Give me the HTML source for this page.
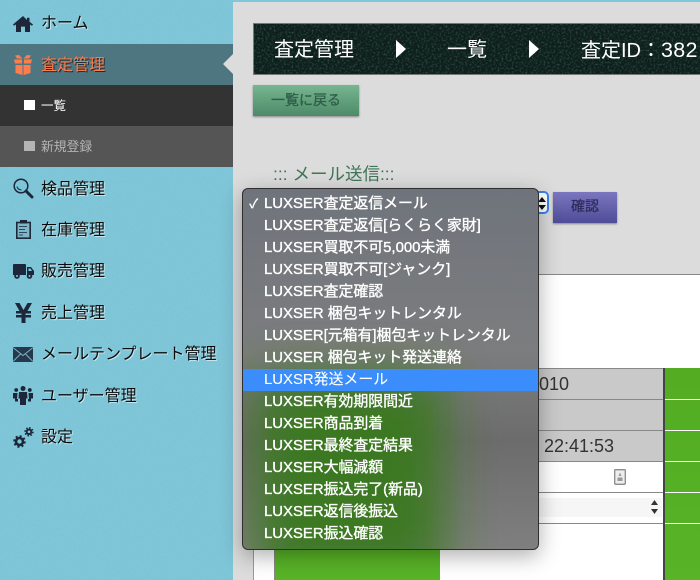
<!DOCTYPE html>
<html lang="ja"><head><meta charset="utf-8">
<style>
*{box-sizing:border-box}
html,body{margin:0;padding:0;overflow:hidden}
body{width:700px;height:580px;position:relative;overflow:hidden;background:#dcdcdc;font-family:"Liberation Sans","Noto Sans CJK JP",sans-serif}
.a{position:absolute}
#side{left:0;top:0;width:233px;height:580px;background:#80c7d9}
.n{position:absolute;left:41px;font-size:16px;line-height:20px;color:#0a0a0a;white-space:nowrap;text-shadow:1px 1px 0 rgba(255,255,255,.55)}
.ic{position:absolute}
.m{position:absolute;left:21px;font-size:14.9px;line-height:22px;height:22px;color:#fff;white-space:nowrap;-webkit-text-stroke:.35px #fff}
</style></head><body>

<!-- top strip -->
<div class="a" style="left:0;top:0;width:700px;height:2px;background:#80c7d9"></div>

<!-- sidebar -->
<div class="a" id="side">
  <svg class="a" width="233" height="580" style="left:0;top:0;opacity:.10"><filter id="sn"><feTurbulence type="fractalNoise" baseFrequency=".5" numOctaves="2"/><feColorMatrix values="0 0 0 0 .1 0 0 0 0 .3 0 0 0 0 .4 0 0 0 1 -.2"/></filter><rect width="233" height="580" filter="url(#sn)"/></svg>
  <div class="a" style="left:0;top:44px;width:233px;height:41px;background:#4e7680"></div>
  <div class="a" style="left:0;top:85px;width:233px;height:41px;background:#333"></div>
  <div class="a" style="left:0;top:126px;width:233px;height:41px;background:#555"></div>
  <div class="a" style="left:223px;top:54px;width:0;height:0;border-style:solid;border-width:10px 10px 10px 0;border-color:transparent #dcdcdc transparent transparent"></div>

  <div class="n" style="top:14px">ホーム</div>
  <div class="n" style="top:56px;color:#ff7d4d;text-shadow:1px 1px 0 rgba(20,30,35,.85)">査定管理</div>
  <div class="a" style="left:24px;top:100px;width:11px;height:10px;background:#fff"></div>
  <div class="a" style="left:41px;top:96px;font-size:12.5px;line-height:20px;color:#fff">一覧</div>
  <div class="a" style="left:24px;top:141px;width:11px;height:10px;background:#b4b4b4"></div>
  <div class="a" style="left:41px;top:137px;font-size:12.8px;line-height:20px;color:#b4b4b4;white-space:nowrap">新規登録</div>
  <div class="n" style="top:180px">検品管理</div>
  <div class="n" style="top:221px">在庫管理</div>
  <div class="n" style="top:262px">販売管理</div>
  <div class="n" style="top:304px">売上管理</div>
  <div class="n" style="top:345px">メールテンプレート管理</div>
  <div class="n" style="top:387px">ユーザー管理</div>
  <div class="n" style="top:428px">設定</div>

  <!-- home -->
  <svg class="ic" style="left:13px;top:16px" width="20" height="16" viewBox="0 0 20 18" preserveAspectRatio="none"><path fill="#1d2739" d="M10 0 0 9.500 1 11 3 9.500V18H8V12H12V18H17V9.500L19 11 20 9.500 16.500 6.500V2H14V4.500Z"/></svg>
  <!-- box -->
  <svg class="ic" style="left:14px;top:55px" width="18" height="20" viewBox="0 0 18 20"><g fill="#ff7d4d"><path d="M1 .5 5 0 8.500 3.500H3ZM17 .5 13 0 9.500 3.500H15Z"/><path d="M0 4.500H8V8.500H1ZM18 4.500H10V8.500H17Z"/><path d="M1.500 10H8.500V20L1.500 18ZM16.500 10H9.500V20L16.500 18Z"/></g></svg>
  <!-- magnifier -->
  <svg class="ic" style="left:13px;top:178px" width="21" height="21" viewBox="0 0 21 21"><circle cx="8" cy="8" r="6.800" fill="none" stroke="#1d2739" stroke-width="1.500"/><path d="M4 8.500Q4.500 11.500 8.500 12" fill="none" stroke="#1d2739" stroke-width="1"/><path d="M13 13 19 19" stroke="#1d2739" stroke-width="3" stroke-linecap="round"/></svg>
  <!-- clipboard -->
  <svg class="ic" style="left:16px;top:220px" width="15" height="19" viewBox="0 0 15 19"><rect x=".8" y="2.500" width="13.400" height="15.700" fill="#7cb6c7" stroke="#1d2739" stroke-width="1.600"/><rect x="4" y="0" width="7" height="3.500" fill="#1d2739"/><path d="M3 6.500H11M3 9.500H9M3 12.500H11M3 15H7" stroke="#2c4a5e" stroke-width="1"/></svg>
  <!-- truck -->
  <svg class="ic" style="left:13px;top:264px" width="21" height="15" viewBox="0 0 21 15"><g fill="#1d2739"><path d="M0 1Q0 0 1 0H12Q13 0 13 1V11H0Z"/><path d="M14 3H18L21 7V11H14ZM15.500 4.500V7H19L17.500 4.500Z" fill-rule="evenodd"/><circle cx="4" cy="12" r="2.800"/><circle cx="16.500" cy="12" r="2.800"/></g><circle cx="4" cy="12" r="1" fill="#80c7d9"/><circle cx="16.500" cy="12" r="1" fill="#80c7d9"/></svg>
  <!-- yen -->
  <svg class="ic" style="left:15px;top:303px" width="17" height="20" viewBox="0 0 17 20"><path fill="#1d2739" d="M0 0H4.500L8.500 7 12.500 0H17L12.500 8H16V10.500H10.500V12H16V14.500H10.500V20H6.500V14.500H1V12H6.500V10.500H1V8H4.500Z"/></svg>
  <!-- envelope -->
  <svg class="ic" style="left:13px;top:347px" width="20" height="15" viewBox="0 0 20 15"><rect width="20" height="15" rx="1" fill="#26384c"/><path d="M.5 1 10 8.500 19.500 1M.5 14 7.500 7M19.500 14 12.500 7" fill="none" stroke="#7fb5c5" stroke-width=".9"/></svg>
  <!-- users -->
  <svg class="ic" style="left:13px;top:386px" width="20" height="19" viewBox="0 0 20 19"><g fill="#1d2739"><circle cx="10" cy="2.500" r="2.500"/><circle cx="3.200" cy="4" r="1.900"/><circle cx="16.800" cy="4" r="1.900"/><path d="M6 6H14L14.500 12.500H13V19H7V12.500H5.500Z"/><path d="M0 7H4.500L4 13H5V15.500H2V12.500H0ZM20 7H15.500L16 13H15V15.500H18V12.500H20Z"/></g></svg>
  <!-- gears -->
  <svg class="ic" style="left:13px;top:427px" width="21" height="21" viewBox="0 0 21 21"><g fill="none" stroke="#1d2739"><circle cx="6.500" cy="14.500" r="3.500" stroke-width="2.600"/><circle cx="6.500" cy="14.500" r="5.200" stroke-width="2.200" stroke-dasharray="2 2.080"/><circle cx="16" cy="4.800" r="2.300" stroke-width="1.900"/><circle cx="16" cy="4.800" r="3.800" stroke-width="1.800" stroke-dasharray="1.500 1.480"/></g></svg>
</div>

<!-- breadcrumb -->
<div class="a" style="left:253px;top:23px;width:447px;height:52px;background:#0d1f1b;border:1px solid #777;border-right:0;overflow:hidden">
  <svg class="a" width="447" height="52" style="left:0;top:0;opacity:.3"><filter id="bn"><feTurbulence type="fractalNoise" baseFrequency=".5" numOctaves="3"/><feColorMatrix values="0 0 0 0 .25 0 0 0 0 .42 0 0 0 0 .38 0 0 0 2.600 -1.200"/></filter><rect width="447" height="52" filter="url(#bn)"/></svg>
</div>
<div class="a" style="left:274px;top:36px;font-size:20px;line-height:28px;color:#fff;white-space:nowrap">査定管理</div>
<div class="a" style="left:396px;top:40px;width:0;height:0;border-style:solid;border-width:9.500px 0 9.500px 10px;border-color:transparent transparent transparent #fff"></div>
<div class="a" style="left:447px;top:36px;font-size:20px;line-height:28px;color:#fff;white-space:nowrap">一覧</div>
<div class="a" style="left:529px;top:40px;width:0;height:0;border-style:solid;border-width:9.500px 0 9.500px 10px;border-color:transparent transparent transparent #fff"></div>
<div class="a" style="left:581px;top:36px;width:119px;overflow:hidden;font-size:20px;line-height:28px;color:#fff;white-space:nowrap">査定ID：<span style="font-size:21.500px;letter-spacing:.3px">382</span></div>

<!-- back button -->
<div class="a" style="left:253px;top:85px;width:106px;height:31px;background:linear-gradient(#76b690,#4e8a68);box-shadow:0 1px 2px rgba(0,0,0,.4);text-align:center;font-size:14px;line-height:30px;color:#2f5e48;-webkit-text-stroke:.3px #2f5e48">一覧に戻る</div>

<div class="a" style="left:273px;top:162px;font-size:17.500px;line-height:24px;color:#3f7558;white-space:nowrap">::: メール送信:::</div>

<!-- confirm -->
<div class="a" style="left:535px;top:191px;width:14px;height:23px;background:#fff;border:2px solid #3b82f0;border-left:0;border-radius:0 5px 5px 0"></div>
<svg class="a" style="left:538px;top:197px" width="8" height="13" viewBox="0 0 8 13"><path d="M4 0 8 5H0ZM4 13 0 8H8Z" fill="#111"/></svg>
<div class="a" style="left:553px;top:192px;width:64px;height:31px;background:linear-gradient(#7c76bf,#4f4d98);box-shadow:0 1px 2px rgba(0,0,0,.4);text-align:center;font-size:14px;line-height:29px;color:#2f2c5e;-webkit-text-stroke:.3px #2f2c5e">確認</div>

<!-- white panel -->
<div class="a" style="left:253px;top:274px;width:447px;height:306px;background:#fff;border-top:1px solid #888;border-left:1px solid #999"></div>

<!-- table -->
<div class="a" style="left:440px;top:368px;width:223px;height:93px;background:#c9c9c9"></div>
<div class="a" style="left:253px;top:368px;width:410px;height:1px;background:#888"></div>
<div class="a" style="left:440px;top:399px;width:223px;height:1px;background:#888"></div>
<div class="a" style="left:440px;top:430px;width:223px;height:1px;background:#888"></div>
<div class="a" style="left:440px;top:461px;width:223px;height:1px;background:#888"></div>
<div class="a" style="left:440px;top:492px;width:223px;height:1px;background:#888"></div>
<div class="a" style="left:440px;top:523px;width:223px;height:1px;background:#888"></div>
<div class="a" style="left:539px;top:373px;font-size:18px;line-height:22px;color:#333">010</div>
<div class="a" style="left:544px;top:435px;font-size:18px;line-height:22px;color:#333;white-space:nowrap">22:41:53</div>
<svg class="a" style="left:614px;top:469px" width="12" height="16" viewBox="0 0 12 16"><rect x=".7" y=".7" width="10.600" height="14.600" rx="1" fill="#eee" stroke="#8b8b8b" stroke-width="1.300"/><path d="M6 3.500 7.500 7H4.500ZM3.500 8.500H8.500V12H3.500Z" fill="#999"/></svg>
<div class="a" style="left:440px;top:498px;width:222px;height:19px;background:#f6f6f6"></div>
<svg class="a" style="left:651px;top:500px" width="7" height="14" viewBox="0 0 7 14"><path d="M3.500 0 7 5H0ZM3.500 14 0 9H7Z" fill="#333"/></svg>
<div class="a" style="left:663px;top:368px;width:2px;height:212px;background:#444"></div>
<div class="a" style="left:665px;top:368px;width:35px;height:212px;background:linear-gradient(#53ac22,#58b327)"></div>
<div class="a" style="left:665px;top:399px;width:35px;height:1px;background:#fff"></div>
<div class="a" style="left:665px;top:430px;width:35px;height:1px;background:#fff"></div>
<div class="a" style="left:665px;top:461px;width:35px;height:1px;background:#fff"></div>
<div class="a" style="left:665px;top:492px;width:35px;height:1px;background:#fff"></div>
<div class="a" style="left:665px;top:523px;width:35px;height:1px;background:#fff"></div>
<div class="a" style="left:274px;top:540px;width:166px;height:40px;background:#58b327;border-left:1px solid #888;border-right:1px solid #888"></div>

<!-- dropdown menu -->
<div class="a" style="left:242px;top:188px;width:297px;height:362px;border:1px solid #2f2f2f;border-radius:6px;overflow:hidden;box-shadow:0 6px 22px rgba(0,0,0,.32);background:linear-gradient(#6f747c,#7c7d7e 45%,#6c6c6c 70%,#7f7f7f)">
  <svg class="a" style="left:0;top:0" width="295" height="360"><filter id="gb" x="-50%" y="-50%" width="200%" height="200%"><feGaussianBlur stdDeviation="24"/></filter><rect x="12" y="185" width="190" height="205" fill="#38781a" fill-opacity=".95" filter="url(#gb)"/></svg>
  <div class="a" style="left:6px;top:4px;font-size:13px;line-height:22px;color:#fff;font-weight:bold">✓</div>
  <div class="m" style="top:4px">LUXSER査定返信メール</div>
  <div class="m" style="top:26px">LUXSER査定返信[らくらく家財]</div>
  <div class="m" style="top:48px">LUXSER買取不可5,000未満</div>
  <div class="m" style="top:70px">LUXSER買取不可[ジャンク]</div>
  <div class="m" style="top:92px">LUXSER査定確認</div>
  <div class="m" style="top:114px">LUXSER 梱包キットレンタル</div>
  <div class="m" style="top:136px">LUXSER[元箱有]梱包キットレンタル</div>
  <div class="m" style="top:158px">LUXSER 梱包キット発送連絡</div>
  <div class="a" style="left:0;top:180px;width:295px;height:22px;background:#3a8dfa"></div>
  <div class="m" style="top:180px;-webkit-text-stroke:.1px #fff">LUXSR発送メール</div>
  <div class="m" style="top:202px">LUXSER有効期限間近</div>
  <div class="m" style="top:224px">LUXSER商品到着</div>
  <div class="m" style="top:246px">LUXSER最終査定結果</div>
  <div class="m" style="top:268px">LUXSER大幅減額</div>
  <div class="m" style="top:290px">LUXSER振込完了(新品)</div>
  <div class="m" style="top:312px">LUXSER返信後振込</div>
  <div class="m" style="top:334px">LUXSER振込確認</div>
</div>
</body></html>
